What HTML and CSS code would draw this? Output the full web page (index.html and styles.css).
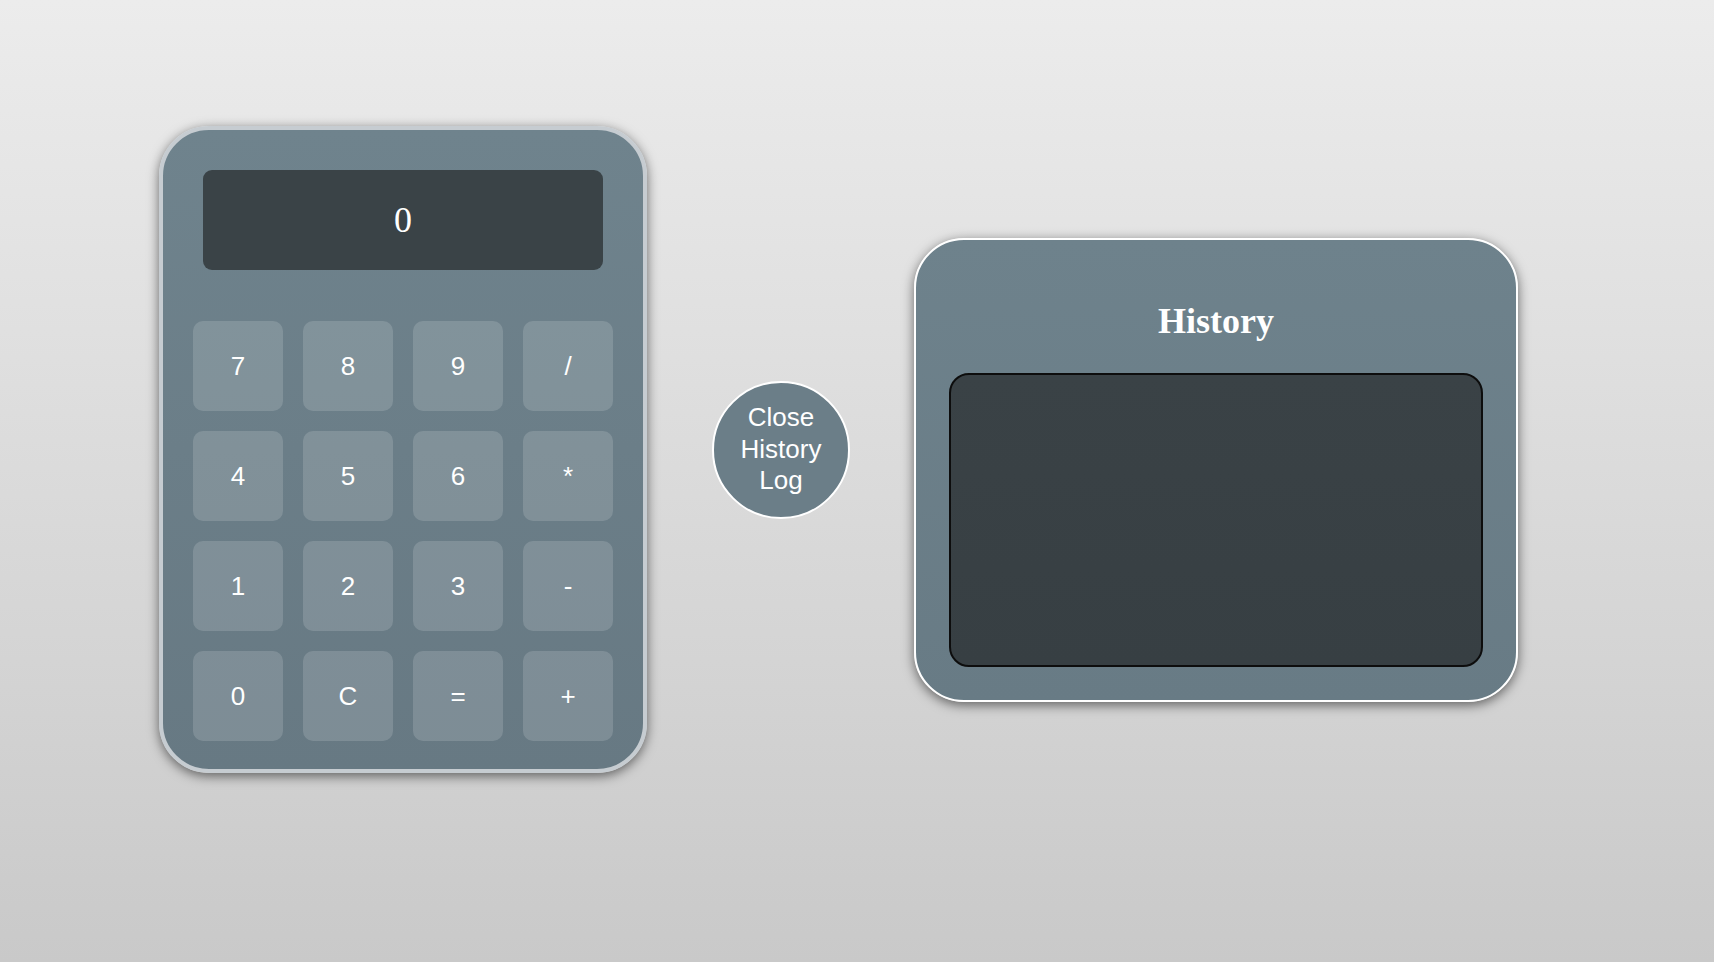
FILE: index.html
```html
<!DOCTYPE html>
<html lang="en">
<head>
<meta charset="utf-8">
<title>Calculator</title>
<link rel="stylesheet" href="styles.css">
</head>
<body>
<main class="stage">
  <section class="calc">
    <div class="display">0</div>
    <div class="keys">
      <button class="key">7</button>
      <button class="key">8</button>
      <button class="key">9</button>
      <button class="key">/</button>
      <button class="key">4</button>
      <button class="key">5</button>
      <button class="key">6</button>
      <button class="key">*</button>
      <button class="key">1</button>
      <button class="key">2</button>
      <button class="key">3</button>
      <button class="key">-</button>
      <button class="key">0</button>
      <button class="key">C</button>
      <button class="key">=</button>
      <button class="key">+</button>
    </div>
  </section>
  <button class="toggle">Close History Log</button>
  <section class="history">
    <h2 class="history-title">History</h2>
    <div class="history-log"></div>
  </section>
</main>
</body>
</html>
```

FILE: styles.css
```css
html, body {
  margin: 0;
  padding: 0;
}

body {
  width: 1714px;
  height: 962px;
  background: linear-gradient(to bottom, #ececec 0%, #c9c9c9 100%);
  font-family: "Liberation Sans", Arial, sans-serif;
  overflow: hidden;
}

.stage {
  display: flex;
  align-items: center;
  padding: 126px 0 0 159px;
}

.calc {
  box-sizing: border-box;
  width: 488px;
  height: 647px;
  border: 4px solid #c6ccd1;
  border-radius: 50px;
  padding: 40px 30px 28px;
  background: linear-gradient(to bottom, #6f838d 0%, #677983 100%);
  box-shadow: 0 3px 12px rgba(0, 0, 0, 0.55);
  flex: none;
}

.display {
  margin: 0 10px;
  height: 100px;
  border-radius: 9px;
  background: #3a4347;
  color: #ffffff;
  font-family: "Liberation Serif", "Times New Roman", serif;
  font-size: 36px;
  display: flex;
  align-items: center;
  justify-content: center;
}

.keys {
  margin-top: 51px;
  display: grid;
  grid-template-columns: repeat(4, 90px);
  grid-auto-rows: 90px;
  gap: 20px;
}

.key {
  border: none;
  border-radius: 10px;
  background: rgba(255, 255, 255, 0.15);
  color: #ffffff;
  font-family: "Liberation Sans", Arial, sans-serif;
  font-size: 26px;
  padding: 0;
  margin: 0;
  display: flex;
  align-items: center;
  justify-content: center;
}

.toggle {
  box-sizing: border-box;
  flex: none;
  width: 138px;
  height: 138px;
  margin: 0 64px 0 65px;
  padding: 0 12px;
  border: 2px solid #ffffff;
  border-radius: 50%;
  background: #6b7e88;
  color: #ffffff;
  font-family: "Liberation Sans", Arial, sans-serif;
  font-size: 26px;
  line-height: 31.7px;
  text-align: center;
}

.history {
  box-sizing: border-box;
  flex: none;
  width: 604px;
  height: 464px;
  margin-top: 40px;
  border: 2px solid #ffffff;
  border-radius: 50px;
  padding: 61px 33px 33px;
  background: linear-gradient(to bottom, #6e828c 0%, #687b85 100%);
  box-shadow: 0 3px 12px rgba(0, 0, 0, 0.55);
}

.history-title {
  margin: 0 0 31px;
  font-family: "Liberation Serif", "Times New Roman", serif;
  font-size: 36px;
  font-weight: bold;
  line-height: 41px;
  color: #ffffff;
  text-align: center;
}

.history-log {
  box-sizing: border-box;
  height: 294px;
  border: 2px solid #0d0d0d;
  border-radius: 20px;
  background: linear-gradient(to bottom, #3a4246 0%, #373f43 100%);
}
```
